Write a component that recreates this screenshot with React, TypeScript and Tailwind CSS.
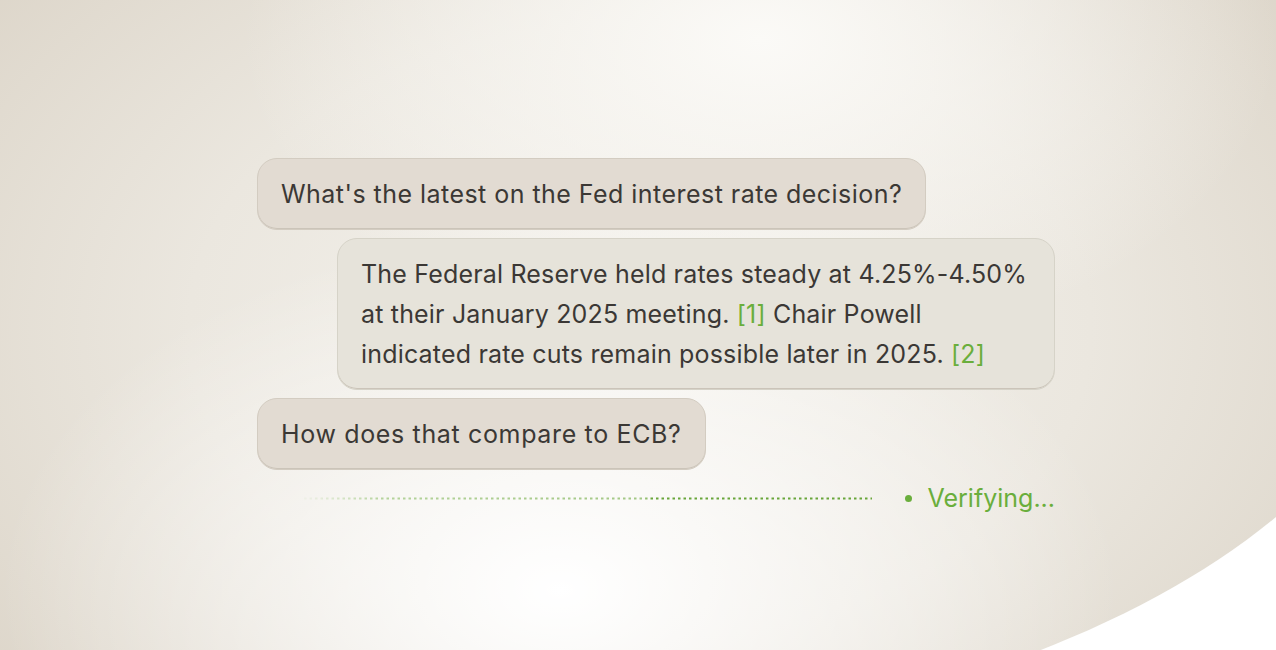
import React from "react";

const font = { fontFamily: "Inter, 'Noto Sans', sans-serif" };

function Bubble({
  children,
  tone = "user",
  tracking = "tracking-[0.5px]",
}: {
  children: React.ReactNode;
  tone?: "user" | "bot";
  tracking?: string;
}) {
  return (
    <div
      className={`rounded-[20px] border px-[23px] py-[15px] text-[25px] leading-[40px] text-[#3b3835] shadow-[inset_0_-1px_0_#cbc4b9] ${tracking} ${
        tone === "user" ? "border-[#d3ccc1] bg-[#e2dbd2]" : "border-[#d6d3c8] bg-[#e6e3da]"
      }`}
    >
      {children}
    </div>
  );
}

function Cite({ n }: { n: number }) {
  return <span className="text-[#6aae3c]">[{n}]</span>;
}

function DottedTrail() {
  return (
    <svg width="568" height="3" viewBox="0 0 568 3" className="block">
      <defs>
        <linearGradient id="trail" x1="0" x2="568" y1="0" y2="0" gradientUnits="userSpaceOnUse">
          <stop offset="0" stopColor="#b9d6a2" stopOpacity="0.1" />
          <stop offset="0.14" stopColor="#b4d39b" stopOpacity="1" />
          <stop offset="0.6" stopColor="#a3c885" stopOpacity="1" />
          <stop offset="0.61" stopColor="#68a63a" stopOpacity="1" />
          <stop offset="1" stopColor="#68a63a" stopOpacity="1" />
        </linearGradient>
      </defs>
      <line x1="0" y1="1.5" x2="568" y2="1.5" stroke="url(#trail)" strokeWidth="2" strokeDasharray="2.5 3" />
    </svg>
  );
}

export default function App() {
  return (
    <div className="relative h-[650px] w-full overflow-hidden bg-white" style={font}>
      {/* backdrop shape */}
      <div className="absolute left-0 top-0 h-[735px] w-[1449px] rounded-br-[889px_535px] bg-[radial-gradient(ellipse_560px_360px_at_560px_590px,#ffffff_0%,rgba(255,255,255,0)_100%),radial-gradient(ellipse_520px_320px_at_760px_40px,#fbfaf7_0%,rgba(251,250,247,0)_100%),radial-gradient(ellipse_820px_560px_at_640px_330px,#f5f3ee_0%,#ebe7df_55%,#ddd6ca_100%)]" />

      <div className="relative pl-[257px] pt-[158px]">
        <div className="flex w-[798px] flex-col">
          <div className="self-start">
            <Bubble tracking="tracking-[0.46px]">What's the latest on the Fed interest rate decision?</Bubble>
          </div>

          <div className="mt-[8px] w-[718px] self-end">
            <Bubble tone="bot" tracking="tracking-[0.18px]">
              <span className="block whitespace-nowrap">The Federal Reserve held rates steady at 4.25%-4.50%</span>
              <span className="block whitespace-nowrap">
                at their January 2025 meeting. <Cite n={1} /> Chair Powell
              </span>
              <span className="block whitespace-nowrap">
                indicated rate cuts remain possible later in 2025. <Cite n={2} />
              </span>
            </Bubble>
          </div>

          <div className="mt-[8px] self-start">
            <Bubble tracking="tracking-[0.65px]">How does that compare to ECB?</Bubble>
          </div>

          <div className="mt-[12px] flex items-center justify-end">
            <DottedTrail />
            <span className="ml-[33px] h-[7px] w-[7px] rounded-full bg-[#6aae3c]" />
            <span className="ml-[16px] text-[25px] leading-[32px] tracking-[0px] text-[#6aae3c]">Verifying...</span>
          </div>
        </div>
      </div>
    </div>
  );
}
